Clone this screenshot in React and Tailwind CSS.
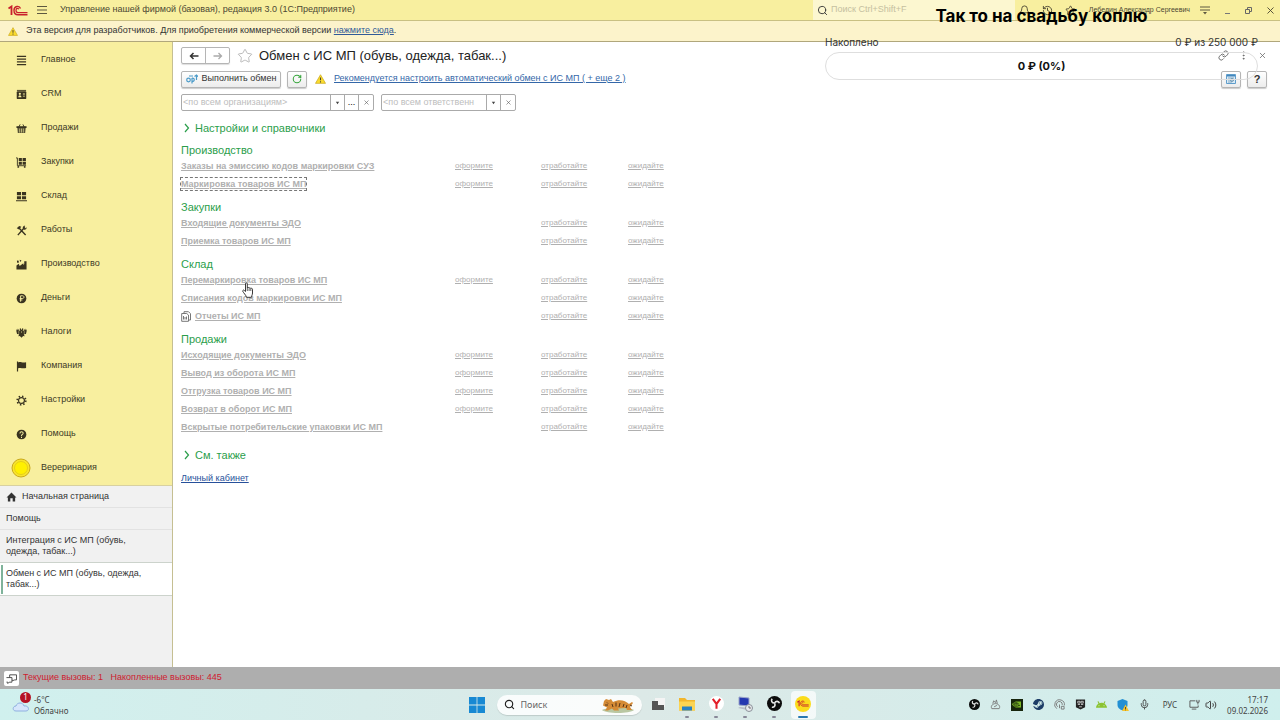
import React from 'react';
import { Bell, History, Link, Mic, MoreVertical, RotateCw, Search, Star, Volume2, X } from 'lucide-react';
import { SiNvidia, SiSteam, SiAndroid } from 'react-icons/si';

const menu = [
  { label: 'Главное', icon: 'main' },
  { label: 'CRM', icon: 'crm' },
  { label: 'Продажи', icon: 'sales' },
  { label: 'Закупки', icon: 'cart' },
  { label: 'Склад', icon: 'stock' },
  { label: 'Работы', icon: 'works' },
  { label: 'Производство', icon: 'factory' },
  { label: 'Деньги', icon: 'money' },
  { label: 'Налоги', icon: 'taxes' },
  { label: 'Компания', icon: 'flag' },
  { label: 'Настройки', icon: 'gear' },
  { label: 'Помощь', icon: 'help' },
  { label: 'Вереринария', icon: 'coin' },
];

const sections = [
  {
    title: 'Производство',
    rows: [
      { name: 'Заказы на эмиссию кодов маркировки СУЗ', create: true },
      { name: 'Маркировка товаров ИС МП', create: true, focused: true },
    ],
  },
  {
    title: 'Закупки',
    rows: [{ name: 'Входящие документы ЭДО' }, { name: 'Приемка товаров ИС МП' }],
  },
  {
    title: 'Склад',
    rows: [
      { name: 'Перемаркировка товаров ИС МП', create: true },
      { name: 'Списания кодов маркировки ИС МП' },
      { name: 'Отчеты ИС МП', report: true },
    ],
  },
  {
    title: 'Продажи',
    rows: [
      { name: 'Исходящие документы ЭДО', create: true },
      { name: 'Вывод из оборота ИС МП', create: true },
      { name: 'Отгрузка товаров ИС МП', create: true },
      { name: 'Возврат в оборот ИС МП', create: true },
      { name: 'Вскрытые потребительские упаковки ИС МП' },
    ],
  },
];

const shapes = {
  main: <path d="M1 1.5h10M1 4.5h10M1 7.5h10M1 10.5h10" stroke="currentColor" strokeWidth="1.2" />,
  crm: (
    <>
      <path d="M1 1h10v1H1z" fill="currentColor" />
      <rect x="0.8" y="2.5" width="10.4" height="8.5" rx="1" fill="currentColor" />
      <path d="M2.5 9c0-3 3.5-3 3.5 0zM7.5 5h2.2v1H7.5zM7.5 7.3h2.2v1H7.5z" fill="#f7efa0" />
      <circle cx="4.2" cy="5.3" r="1.2" fill="#f7efa0" />
    </>
  ),
  sales: (
    <>
      <path d="M3 4.5L4.5 1.5M9 4.5L7.5 1.5" stroke="currentColor" fill="none" />
      <path d="M0.5 3.5h11v2h-11z" fill="currentColor" />
      <path d="M1.5 5.5h9L10 11H2z" fill="currentColor" opacity="0.85" />
      <path d="M4 6v4.5M6 6v4.5M8 6v4.5" stroke="#f7efa0" strokeWidth="0.7" />
    </>
  ),
  cart: (
    <>
      <path d="M0 1h1.5v8.5H11" stroke="currentColor" fill="none" />
      <path d="M3 1h3.4v3.4H3zM7.2 1h3.6v3.4H7.2zM3 5.2h3.4v3.3H3zM7.2 5.2h3.6v3.3H7.2z" fill="currentColor" />
      <circle cx="2.5" cy="10.8" r="1" fill="currentColor" />
      <circle cx="9.5" cy="10.8" r="1" fill="currentColor" />
    </>
  ),
  stock: <path d="M1 1h4.5v3.7H1zM6.5 1H11v3.7H6.5zM1 5.6h4.5v3.5H1zM6.5 5.6H11v3.5H6.5zM0 10h12v1.3H0z" fill="currentColor" />,
  works: (
    <>
      <path d="M3 3l7.5 8M9.5 2.5L2 11" stroke="currentColor" strokeWidth="1.5" fill="none" />
      <path d="M0.8 3.5L3.5 1l2.3 1-2.5 3-1-.6zM7.3 3.2C7.5 1 9.5.5 10 1L8.8 2.8l1 .9L11.5 2.5c.5 2-1.5 3.3-3 2.5z" fill="currentColor" />
    </>
  ),
  factory: (
    <path d="M0.5 11.5V7L3 5.2 4 7.5 8 4.5V6.5l1-1V2.5h2.5v9zM1 1.5l2 .5v2L1.2 4zM4 .8l2 .7-1.5 1.7z" fill="currentColor" />
  ),
  money: (
    <>
      <circle cx="6" cy="6" r="5.3" fill="currentColor" />
      <path d="M5 9.5V3h2c2.3 0 2.3 3 0 3H4M4 7.6h3" stroke="#f7efa0" strokeWidth="1" fill="none" />
    </>
  ),
  taxes: (
    <>
      <path d="M6 3.2L7.3 1l.8 1.2L7.3 4 9 3.8 9.5 1.8l.7 1.7.6-2 .9 2.7-.8 3.3L8.5 8l1 2-1.7-.3L6 11.7 4.2 9.7 2.5 10l1-2L1.1 7.5.3 4.2l.9-2.7.6 2 .7-1.7L3 3.8l1.7.2-.8-1.8L4.7 1z" fill="currentColor" />
      <path d="M3 4.5v3M9 4.5v3M6 4.5v2" stroke="#f7efa0" strokeWidth="0.5" />
    </>
  ),
  flag: <path d="M1 .5h1.3v1c3-1.5 4 1.2 8.7-.2v6.2C7 9 6 6.5 2.3 8v3.5H1z" fill="currentColor" />,
  gear: (
    <>
      <circle cx="6" cy="6" r="3.2" stroke="currentColor" strokeWidth="1.3" fill="none" />
      <circle cx="6" cy="6" r="4.7" stroke="currentColor" strokeWidth="1.8" strokeDasharray="1.6 2.09" fill="none" />
    </>
  ),
  help: (
    <>
      <circle cx="6" cy="6" r="5.3" fill="currentColor" />
      <path d="M4.3 4.8c0-2.4 3.6-2.2 3.5-.2C7.8 6 6 5.9 6 7.5M6 8.5v1.2" stroke="#f7efa0" strokeWidth="1.1" fill="none" />
    </>
  ),
};

function MenuIcon({ name }) {
  if (name === 'coin') {
    return (
      <svg viewBox="0 0 20 20" className="size-5">
        <circle cx="10" cy="10" r="9" fill="#f9e52a" stroke="#c9a91c" />
        <circle cx="10" cy="10" r="6.5" fill="#fff000" stroke="#e0c61a" strokeWidth="0.8" />
      </svg>
    );
  }
  return <svg viewBox="0 0 12 12" className="size-[11px] text-[#3a3420]">{shapes[name]}</svg>;
}

function Logo1C({ className }) {
  return (
    <svg viewBox="0 0 20 11" className={className} fill="none" stroke="#c8202c">
      <path d="M0.5 3.5L3.5 1.5V10" strokeWidth="1.8" />
      <path d="M12.5 3.5C11.5.5 6 .5 6 5.3 6 8.5 8 9.8 10 9.8h9.5" strokeWidth="1.4" />
      <path d="M10.8 4.2C10 2.8 8 3.2 8 5.3 8 7 9 7.6 10 7.6h9.5" strokeWidth="1.2" />
    </svg>
  );
}

function ObsLogo({ className }) {
  return (
    <svg viewBox="0 0 16 16" className={className}>
      <circle cx="8" cy="8" r="8" fill="#0c0c0c" />
      <g fill="none" stroke="#e6e6e6" strokeWidth="1.7">
        <path d="M8 7.5C5 7.5 4 5 5.5 3" />
        <path d="M8 7.5c1.5-2.6 4.5-2.3 5.3.3" />
        <path d="M8 7.5c1.5 2.6-.3 4.9-2.8 4.5" />
      </g>
    </svg>
  );
}

function Warning({ className }) {
  return (
    <svg viewBox="0 0 12 11" className={className}>
      <path d="M6 .8L11.5 10.3H.5z" fill="#fbdc2e" stroke="#c9a81b" strokeWidth="0.8" strokeLinejoin="round" />
      <path d="M6 3.8v3.2M6 8v1.3" stroke="#4a4432" strokeWidth="1.2" />
    </svg>
  );
}

function TitleBar() {
  return (
    <header className="flex h-[21px] items-center border-b border-[#c9c083] bg-[#f8ef9f] pl-2 pr-1 text-[9px] text-[#4b4733]">
      <Logo1C className="h-[11px] w-5" />
      <button aria-label="Меню" className="ml-2">
        <svg viewBox="0 0 12 10" className="h-[10px] w-3"><path d="M1 1.5h10M1 5h10M1 8.5h10" stroke="#5d5840" /></svg>
      </button>
      <span className="ml-3 flex-1">Управление нашей фирмой (базовая), редакция 3.0 (1С:Предприятие)</span>
      <label className="flex h-5 w-[202px] items-center gap-[3px] bg-[#fcf7d0] pl-1">
        <Search className="size-[11px] text-[#333]" />
        <input aria-label="Поиск" placeholder="Поиск Ctrl+Shift+F" className="w-32 placeholder:text-[#c5c0a0]" />
      </label>
      <button aria-label="Уведомления" className="ml-1"><Bell className="size-[11px]" /></button>
      <button aria-label="История" className="ml-3"><History className="size-[11px]" /></button>
      <button aria-label="Избранное" className="ml-3"><Star className="size-[11px]" /></button>
      <span className="ml-2 min-w-[106px] whitespace-nowrap text-right text-[7px]">Лебедин Александр Сергеевич</span>
      <button aria-label="Настройки" className="ml-[9px]">
        <svg viewBox="0 0 12 10" className="h-[10px] w-3"><path d="M1 2h10M1 5h10" stroke="#5d5840" /><path d="M4 7h4L6 9.5z" fill="#5d5840" /></svg>
      </button>
      <div className="ml-3 flex items-center gap-3">
        <button aria-label="Свернуть">
          <svg viewBox="0 0 9 9" className="size-[9px]"><path d="M2 7.5h5" stroke="#777" /></svg>
        </button>
        <button aria-label="Развернуть">
          <svg viewBox="0 0 9 9" className="size-[9px]" fill="none" stroke="#666"><path d="M1.5 3.5h4v4h-4zM3.5 3V1.5h4v4H6" /></svg>
        </button>
        <button aria-label="Закрыть"><X className="size-[11px]" /></button>
      </div>
    </header>
  );
}

function Sidebar() {
  return (
    <aside className="flex w-[173px] shrink-0 flex-col border-r border-[#c5bf92] bg-[#f1f1f1] text-[9px] text-[#333]">
      <nav className="border-b border-[#d8d1a0] bg-[#f8ef9f] pt-px">
        {menu.map((item) => (
          <a key={item.label} href="#" className="flex h-[34px] items-center text-[#3d3a26]">
            <span className="ml-[11px] mr-[10px] flex w-5 justify-center"><MenuIcon name={item.icon} /></span>
            {item.label}
          </a>
        ))}
      </nav>
      <a href="#" className="flex h-[22px] items-center gap-[5px] border-b border-[#e2e2e2] pl-[6px]">
        <svg viewBox="0 0 12 11" className="h-[10px] w-[11px]"><path d="M6 .5L11.5 6H10v4.5H7.3V7H4.7v3.5H2V6H.5z" fill="#333" /></svg>
        Начальная страница
      </a>
      <a href="#" className="flex h-[22px] items-center border-b border-[#e2e2e2] pl-[6px]">Помощь</a>
      <a href="#" className="border-b border-[#ccd3cc] py-[5px] pl-[6px] pr-10 leading-[11px]">Интеграция с ИС МП (обувь, одежда, табак...)</a>
      <a href="#" className="flex h-[33px] items-center border-b border-[#ccd3cc] bg-white">
        <span className="ml-px h-[29px] w-[2px] bg-[#7fb39a]" />
        <span className="ml-[3px] flex-1 pr-6 leading-[11px]">Обмен с ИС МП (обувь, одежда, табак...)</span>
      </a>
    </aside>
  );
}

const btn = 'flex items-center justify-center rounded-[2px] border border-[#b5b5b5] bg-linear-to-b from-white to-[#ececec] shadow-[0_1px_1px_#00000033]';

function Filter({ label, placeholder, width, dots }) {
  return (
    <div className="flex h-[17px] divide-x divide-[#aaa] rounded-[2px] border border-[#aaa] text-[9px]">
      <input aria-label={label} placeholder={placeholder} className={`${width} px-px placeholder:text-[#bdbdbd]`} />
      <button aria-label="Выбрать" className="flex w-[14px] items-center justify-center">
        <svg viewBox="0 0 6 4" className="h-1 w-[5px]"><path d="M1 .5h4L3 3.5z" fill="#444" /></svg>
      </button>
      {dots && <button aria-label="Открыть список" className="w-[14px] leading-[13px]">...</button>}
      <button aria-label="Очистить" className="flex w-[14px] items-center justify-center"><X className="size-[7px] text-[#555]" /></button>
    </div>
  );
}

function Toolbar() {
  return (
    <>
      <div className="flex h-[17px] items-center">
        <div className="flex h-[17px] divide-x divide-[#b5b5b5] rounded-[2px] border border-[#b5b5b5] shadow-[0_1px_1px_#00000022]">
          <button aria-label="Назад" className="flex w-6 items-center justify-center">
            <svg viewBox="0 0 10 8" className="h-2 w-[10px]" fill="none" stroke="#333" strokeWidth="1.5"><path d="M9.5 4H1.5M4.5 1L1.5 4l3 3" /></svg>
          </button>
          <button aria-label="Вперед" className="flex w-[23px] items-center justify-center">
            <svg viewBox="0 0 10 8" className="h-2 w-[10px]" fill="none" stroke="#aaa" strokeWidth="1.3"><path d="M.5 4h8M5.5 1l3 3-3 3" /></svg>
          </button>
        </div>
        <button aria-label="В избранное" className="ml-[7px]"><Star className="size-4 text-[#aaa]" strokeWidth={1.2} /></button>
        <h1 className="ml-[6px] flex-1 text-[13px] text-[#222]">Обмен с ИС МП (обувь, одежда, табак...)</h1>
        <div className="flex items-center gap-[9px] text-[#666]">
          <button aria-label="Ссылка"><Link className="size-[11px]" /></button>
          <button aria-label="Еще"><MoreVertical className="size-[11px]" /></button>
          <button aria-label="Закрыть"><X className="size-[9px]" /></button>
        </div>
      </div>
      <div className="mt-[6px] flex h-[18px] items-center text-[9px] text-[#333]">
        <button className={`${btn} h-[17px] w-[100px] gap-1`}>
          <svg viewBox="0 0 12 10" className="h-[10px] w-3" fill="none" stroke="#4c9bc9" strokeWidth="1.2">
            <circle cx="2.5" cy="6" r="1.8" /><path d="M6 4v5.5M6 4.2c3-.7 3 3.6 0 3.4M10.5 1v5M8.5 2.5l2-1.5L12 2.5M3 2h4" />
          </svg>
          Выполнить обмен
        </button>
        <button aria-label="Обновить" className={`${btn} ml-[6px] h-[17px] w-5`}><RotateCw className="size-[10px] text-[#37a53c]" strokeWidth={2.5} /></button>
        <Warning className="ml-2 h-[10px] w-[11px]" />
        <a href="#" className="ml-2 text-[#3467a8] underline">Рекомендуется настроить автоматический обмен с ИС МП ( + еще 2 )</a>
        <button aria-label="Отчет" className={`${btn} ml-auto h-[17px] w-5`}>
          <svg viewBox="0 0 10 10" className="size-[10px]"><path d="M.5.5h9v9h-9z" fill="#d9ebf7" stroke="#5f9dcb" /><path d="M1 1h8v1.5H1z" fill="#4387bc" /><path d="M2 4h6M2 6h6M2 8h4" stroke="#86a9c2" /><circle cx="6" cy="6" r="1.5" fill="none" stroke="#557f9e" strokeWidth="0.7" /></svg>
        </button>
        <button aria-label="Справка" className={`${btn} ml-[6px] h-[17px] w-5 text-[11px] font-bold`}>?</button>
      </div>
      <div className="mt-[6px] flex gap-[7px]">
        <Filter label="Организация" placeholder="<по всем организациям>" width="w-[149px]" dots />
        <Filter label="Ответственный" placeholder="<по всем ответственн" width="w-[105px]" />
      </div>
    </>
  );
}

function Group({ children }) {
  return (
    <button className="flex items-center gap-1 text-[11px] leading-[14px] text-[#2b9e4b]">
      <svg viewBox="0 0 10 10" className="size-[10px]" fill="none" stroke="currentColor" strokeWidth="1.2"><path d="M4 1l3.5 4L4 9" /></svg>
      {children}
    </button>
  );
}

function Documents() {
  return (
    <table className="mt-px w-[534px] table-fixed text-left text-[8px] leading-3 text-[#b0b0b0]">
      <colgroup>
        <col className="w-[274px]" />
        <col className="w-[86px]" />
        <col className="w-[87px]" />
        <col className="w-[87px]" />
      </colgroup>
      {sections.map((s) => (
        <tbody key={s.title}>
          <tr className="h-[21px]">
            <th colSpan={4} className="p-0 align-bottom text-[11px] font-normal leading-[14px] text-[#2b9e4b]">{s.title}</th>
          </tr>
          {s.rows.map((r) => (
            <tr key={r.name} className="h-[18px]">
              <td className="p-0 text-[9px]">
                <span className="flex items-center gap-1">
                  {r.report && (
                    <svg viewBox="0 0 10 11" className="h-[11px] w-[10px]" fill="none" stroke="#777"><path d="M3 2V.7h4.5l2 2V9H8M.7 2.5h5L7.5 4v6.3H.7zM2.5 5v3.5M4 6v2.5M5.5 5.5v3" /></svg>
                  )}
                  <a href="#" className={r.focused ? 'font-bold underline outline outline-dashed outline-[#777]' : 'font-bold underline'}>{r.name}</a>
                </span>
              </td>
              <td className="p-0">{r.create && <a href="#" className="underline">оформите</a>}</td>
              <td className="p-0"><a href="#" className="underline">отработайте</a></td>
              <td className="p-0"><a href="#" className="underline">ожидайте</a></td>
            </tr>
          ))}
        </tbody>
      ))}
    </table>
  );
}

function DonationWidget() {
  return (
    <div className="pointer-events-none absolute right-[22px] top-[5px] w-[433px] font-[Inter,sans-serif] text-[#111]">
      <p className="text-center text-[17px] font-bold leading-[22px] text-black">Так то на свадьбу коплю</p>
      <div className="mt-2 flex justify-between text-[10px] leading-[14px] text-[#333]">
        <span>Накоплено</span>
        <span>0 ₽ из 250 000 ₽</span>
      </div>
      <div className="mt-[3px] flex h-7 items-center justify-center rounded-full border border-[#dedede] text-[11px] font-bold">0 ₽ (0%)</div>
    </div>
  );
}

function Cursor() {
  return (
    <svg viewBox="0 0 12 16" className="absolute left-[242px] top-[282px] h-4 w-3">
      <path d="M3.5 9.5V1.8c0-1.3 1.8-1.3 1.8 0V6c.2-.8 1.7-.8 1.8.2.3-.6 1.6-.5 1.7.4.4-.5 1.7-.3 1.7.7V11c0 2-1 2.5-1 4.3H4.5C4 13 1.5 11 .8 9.3.5 8 1.8 7.7 2.4 8.5z" fill="white" stroke="#222" strokeWidth="0.9" />
      <path d="M5.3 6v3M7.1 6.5V9M8.8 7v2" stroke="#222" strokeWidth="0.7" />
    </svg>
  );
}

function TaskApp({ label, active, running = true, children }) {
  return (
    <button aria-label={label} className={active ? 'flex h-7 w-[25px] flex-col items-center justify-end rounded-sm bg-white/70' : 'flex h-7 w-[25px] flex-col items-center justify-end'}>
      <span className="flex h-[18px] items-center">{children}</span>
      <span className={active ? 'mb-px mt-[3px] h-[2px] w-[10px] rounded-full bg-[#2878b0]' : running ? 'mb-px mt-[3px] h-[2px] w-1 rounded-full bg-[#889]' : 'mb-px mt-[3px] h-[2px] w-1'} />
    </button>
  );
}

function Taskbar() {
  return (
    <footer className="grid h-[31px] grid-cols-[1fr_auto_1fr] items-center bg-linear-to-r from-[#d0f0ee] via-[#dce9e7] to-[#cfefed] font-['Noto_Sans',sans-serif] text-[8px] text-[#444]">
      <div className="flex items-center gap-[2px] pl-3">
        <span className="relative">
          <svg viewBox="0 0 20 16" className="h-4 w-5"><path d="M4 14C0 14 .5 9 4 9c1-4 7-4 8 0 5-1 6 5 2 5z" fill="#d6e6fb" stroke="#8fb0e0" /></svg>
          <span className="absolute -top-[5px] left-2 flex size-[11px] items-center justify-center rounded-full bg-[#b51224] text-white">1</span>
        </span>
        <span className="leading-[11px]">-6°C<br />Облачно</span>
      </div>
      <div className="flex items-center gap-1">
        <button aria-label="Пуск" className="mr-1 p-1">
          <svg viewBox="0 0 16 16" className="size-4" fill="#1789d3"><path d="M0 0h7.6v7.6H0zM8.4 0H16v7.6H8.4zM0 8.4h7.6V16H0zM8.4 8.4H16V16H8.4z" /></svg>
        </button>
        <label className="flex h-5 w-[145px] items-center rounded-full bg-white/85 pl-[7px] text-[9px] shadow-[0_1px_1px_#00000022]">
          <Search className="size-[11px] text-[#222]" strokeWidth={2.5} />
          <input aria-label="Поиск в Windows" placeholder="Поиск" className="ml-[6px] w-20 placeholder:text-[#666]" />
          <svg viewBox="0 0 34 18" className="h-[18px] w-[34px]">
            <path d="M1 14c4-3 28-3 32 0-4 4-28 4-32 0z" fill="#b9c7a2" />
            <path d="M3 5l2-2 3 1 2-1 2 3c6-3 12-2 16 2l3-2 1 1-3 4 2 3h-5l-1-2-8 .5 1 2h-5l-2-2-4 2H4l2-3-4-2z" fill="#d58b36" />
            <path d="M11 8l1 3M15 6.5v4M19 7l-1 4M23 8l-1 3M26 9l-1 3M6 6.5l1 1M4 9h3M29 9l2 1" stroke="#573519" />
          </svg>
        </label>
        <div className="flex gap-1">
          <TaskApp label="Представление задач" running={false}>
            <svg viewBox="0 0 14 14" className="size-[14px]"><path d="M4 1h10v9H4z" fill="#f4f4f4" /><path d="M1 4h6v4h6v5H1z" fill="#555" /></svg>
          </TaskApp>
          <TaskApp label="Проводник">
            <svg viewBox="0 0 16 14" className="h-[14px] w-4"><path d="M0 1h6l2 2h8v10.5H0z" fill="#f2b62d" /><path d="M0 4.5h16v9H0z" fill="#fbd453" /><path d="M3 9.5h10v4H3z" fill="#2781c4" /></svg>
          </TaskApp>
          <TaskApp label="Яндекс Браузер">
            <svg viewBox="0 0 16 16" className="size-[15px]"><circle cx="8" cy="8" r="8" fill="#fff" /><path d="M4 3l4 5.5L12 3M8 8v5.5" stroke="#e3202a" strokeWidth="2.2" fill="none" /></svg>
          </TaskApp>
          <TaskApp label="Удаленный стол">
            <svg viewBox="0 0 16 16" className="size-4"><path d="M2 1l10 1v8L2 9z" fill="#2438b0" stroke="#9ba4c9" /><path d="M3 11l9 1-2 2-9-2z" fill="#b7bcc8" /><circle cx="12" cy="12" r="3.5" fill="#e8eaed" stroke="#8a9099" /><path d="M12 10v2h2" stroke="#555" fill="none" strokeWidth="0.8" /></svg>
          </TaskApp>
          <TaskApp label="OBS Studio"><ObsLogo className="size-[15px]" /></TaskApp>
          <TaskApp label="1С:Предприятие" active>
            <span className="flex size-4 items-center justify-center rounded-full bg-[#fbdc1c]"><Logo1C className="h-[7px] w-3" /></span>
          </TaskApp>
        </div>
      </div>
      <div className="flex items-center justify-end pr-3">
        <div className="flex items-center gap-[10px]">
          <ObsLogo className="size-[11px]" />
          <svg viewBox="0 0 12 12" className="size-[11px]" fill="none" stroke="#777"><path d="M2 10.5C0 7 4 5 6 5s6 2 4 5.5zM3 5l1-3 2 2 1-3 1 4M4.5 8.5L7.5 7" /></svg>
          <span className="flex size-3 items-center justify-center bg-[#17250c]"><SiNvidia className="size-[9px] text-[#7db928]" /></span>
          <SiSteam className="size-[11px] text-[#1d3d67]" />
          <svg viewBox="0 0 12 12" className="size-[11px]" fill="none" stroke="#777"><path d="M3 10.5A5.3 5.3 0 1 1 11.3 7M4 8.5A3.2 3.2 0 1 1 9 6.5M6 6v4M8 8h3v3H8z" /></svg>
          <svg viewBox="0 0 12 12" className="size-[11px]"><path d="M1 .5h10v8.5L6 11.5 1 9z" fill="#222" /><path d="M3 2.5h2.5v2H3zM6.5 2.5H9v2H6.5zM3 6h2.5M6.5 6H9M4.5 8.5h3" stroke="#e8e8e8" strokeWidth="0.8" fill="none" /></svg>
          <SiAndroid className="size-[11px] text-[#8bc331]" />
          <svg viewBox="0 0 12 12" className="size-3"><path d="M5.5 0L10.5 2v4c0 3-2.5 4.5-5 5.5C3 10.5.5 9 .5 6V2z" fill="#2390d3" /><path d="M8.5 5.5L12 12H5z" fill="#f8c42c" /><path d="M8.5 8v2M8.5 10.5v.8" stroke="#333" strokeWidth="0.8" /></svg>
          <Mic className="size-[11px]" />
        </div>
        <span className="ml-[13px]">РУС</span>
        <svg viewBox="0 0 12 12" className="ml-3 size-[11px]" fill="none" stroke="#555"><path d="M7 2H1v7h9V7M3 11h5M8.5 1v2.5h2.5V1M9.7 3.5V6" /></svg>
        <Volume2 className="ml-[5px] size-3" />
        <span className="ml-[10px] text-right leading-[11px]">17:17<br />09.02.2026</span>
      </div>
    </footer>
  );
}

export default function App() {
  return (
    <div className="relative flex min-h-screen flex-col bg-white font-['Liberation_Sans',Arial,sans-serif]">
      <TitleBar />
      <div className="flex h-[21px] items-center gap-2 border-b border-[#b0a77c] bg-[#fcf3cb] pl-2 text-[9px] text-[#333]">
        <Warning className="h-[9px] w-[10px]" />
        <p>Эта версия для разработчиков. Для приобретения коммерческой версии <a href="#" className="text-[#315a98] underline">нажмите сюда</a>.</p>
      </div>
      <div className="flex flex-1">
        <Sidebar />
        <main className="min-w-0 flex-1 pl-2 pr-[13px] pt-[5px]">
          <Toolbar />
          <div className="mt-[10px]"><Group>Настройки и справочники</Group></div>
          <Documents />
          <div className="mt-3"><Group>См. также</Group></div>
          <a href="#" className="mt-[10px] inline-block text-[9px] leading-3 text-[#27509a] underline">Личный кабинет</a>
        </main>
      </div>
      <div className="flex h-[22px] items-center gap-1 bg-[#aeaeae] pl-1 text-[9px] text-[#cf2030]">
        <button aria-label="Сообщения" className="flex size-[15px] items-center justify-center rounded-[2px] bg-white">
          <svg viewBox="0 0 12 12" className="size-[11px]" fill="none" stroke="#444"><path d="M4 5V2h7.5v5.5H9M.5 5h6v5H3.5L2 11.5V10H.5M6.5 8H9" /></svg>
        </button>
        <span className="whitespace-pre">Текущие вызовы: 1   Накопленные вызовы: 445</span>
      </div>
      <Taskbar />
      <DonationWidget />
      <Cursor />
    </div>
  );
}
